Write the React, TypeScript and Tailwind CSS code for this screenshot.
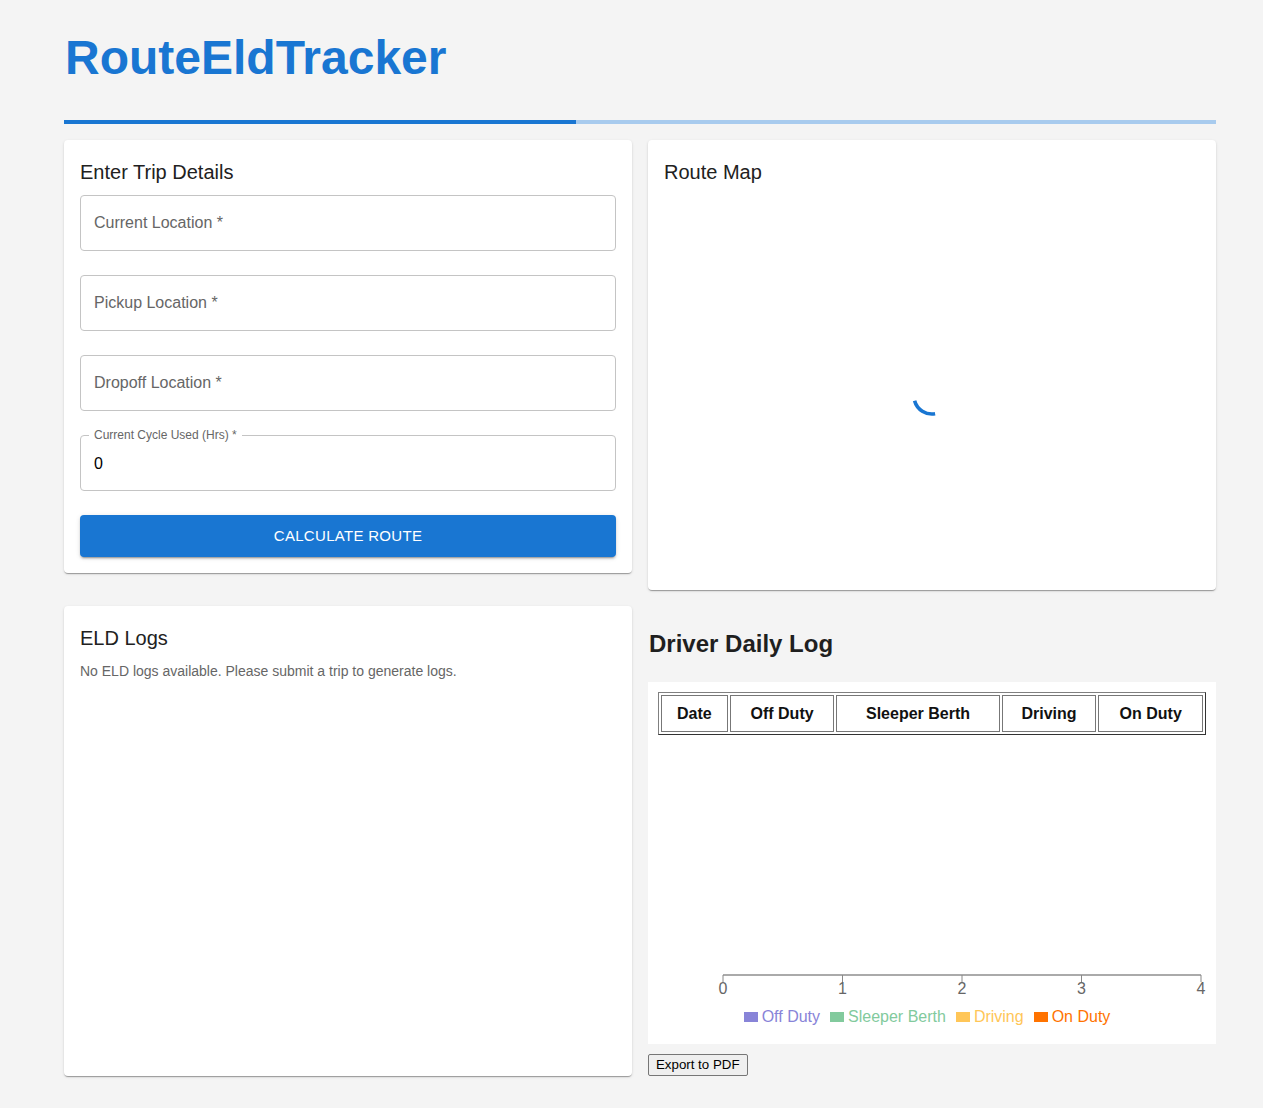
import { useState } from "react";

const font = "font-['Liberation_Sans',Arial,sans-serif]";

const fields = ["Current Location", "Pickup Location", "Dropoff Location"];

const headers = [
  { label: "Date", w: "w-[67px]" },
  { label: "Off Duty", w: "w-[105px]" },
  { label: "Sleeper Berth", w: "w-[164px]" },
  { label: "Driving", w: "w-[95px]" },
  { label: "On Duty", w: "w-[105px]" },
];

const legend = [
  { label: "Off Duty", box: "bg-[#8884d8]", text: "text-[#8884d8]" },
  { label: "Sleeper Berth", box: "bg-[#82ca9d]", text: "text-[#82ca9d]" },
  { label: "Driving", box: "bg-[#ffc658]", text: "text-[#ffc658]" },
  { label: "On Duty", box: "bg-[#ff7300]", text: "text-[#ff7300]" },
];

function Card({ title, children, className = "" }: { title: string; children?: React.ReactNode; className?: string }) {
  return (
    <div
      className={`bg-white rounded-[4px] p-4 shadow-[0_2px_1px_-1px_rgba(0,0,0,0.2),0_1px_1px_0_rgba(0,0,0,0.14),0_1px_3px_0_rgba(0,0,0,0.12)] ${className}`}
    >
      <h6 className="text-[20px] leading-[32px] text-[#212121] mb-[7px]">{title}</h6>
      {children}
    </div>
  );
}

function Spinner() {
  return (
    <svg width="40" height="40" viewBox="0 0 40 40">
      <path d="M23.1 37.7 A18 18 0 0 1 2.6 24.7" fill="none" stroke="#1976d2" strokeWidth="3.6" />
    </svg>
  );
}

export default function App() {
  const [cycle, setCycle] = useState("0");

  return (
    <div className={`min-h-[1108px] bg-[#f4f4f4] ${font}`}>
      <div className="w-[1152px] ml-[64px] pt-[29px]">
        <h1 className="text-[48px] leading-[58px] font-bold text-[#1976d2] pl-[1px]">RouteEldTracker</h1>

        {/* progress bar */}
        <div className="mt-[33px] h-[4px] flex bg-[#a8cbee]">
          <div className="w-[512px] bg-[#1976d2]" />
        </div>

        <div className="mt-4 grid grid-cols-2 gap-4">
          {/* Trip form */}
          <Card title="Enter Trip Details" className="self-start">
            <div className="flex flex-col gap-6">
              {fields.map((f) => (
                <div
                  key={f}
                  className="h-[56px] border border-[#c4c4c4] rounded-[4px] flex items-center px-[13px] text-[16px] text-[#666]"
                >
                  {f} *
                </div>
              ))}
              <div className="relative h-[56px] border border-[#c4c4c4] rounded-[4px] flex items-center px-[13px] pt-[2px]">
                <span className="absolute -top-[8px] left-[8px] px-[5px] bg-white text-[12px] leading-[15px] text-[#666]">
                  Current Cycle Used (Hrs) *
                </span>
                <input
                  value={cycle}
                  onChange={(e) => setCycle(e.target.value)}
                  className="w-full outline-none text-[16px] text-black bg-transparent"
                />
              </div>
              <button className="h-[42px] rounded-[4px] bg-[#1976d2] text-white text-[15px] tracking-[0.3px] shadow-[0_3px_1px_-2px_rgba(0,0,0,0.2),0_2px_2px_0_rgba(0,0,0,0.14),0_1px_5px_0_rgba(0,0,0,0.12)]">
                CALCULATE ROUTE
              </button>
            </div>
          </Card>

          {/* Map */}
          <Card title="Route Map" className="self-start">
            <div className="h-[379px] flex justify-center pt-[181px]">
              <Spinner />
            </div>
          </Card>

          {/* ELD Logs */}
          <Card title="ELD Logs" className="h-[470px]">
            <p className="text-[14px] leading-[20px] text-[#666]">
              No ELD logs available. Please submit a trip to generate logs.
            </p>
          </Card>

          {/* Daily log */}
          <div>
            <h2 className="pt-[24px] pl-[1px] text-[24px] leading-[28px] font-bold text-[#1f1f1f]">Driver Daily Log</h2>
            <div className="mt-[24px] bg-white h-[362px] p-[10px]">
              <table className="border-separate border-spacing-[2px] border border-[#808080] border-b-[#333] border-r-[#333]">
                <thead>
                  <tr>
                    {headers.map((h) => (
                      <th
                        key={h.label}
                        className={`${h.w} h-[37px] border border-[#777] text-[16px] font-bold text-[#111] text-center`}
                      >
                        {h.label}
                      </th>
                    ))}
                  </tr>
                </thead>
              </table>

              {/* time axis */}
              <svg width="548" height="270" className="block -ml-[10px] overflow-visible" viewBox="0 0 548 270">
                <line x1="75" y1="240" x2="553" y2="240" stroke="#aaa" strokeWidth="2" />
                {[75, 194.5, 314, 433.5, 553].map((x, i) => (
                  <g key={i}>
                    <line x1={x} y1="240" x2={x} y2="247" stroke="#888" strokeWidth="1" />
                    <text
                      x={x}
                      y="259"
                      textAnchor="middle"
                      fontSize="16"
                      fill="#666"
                      fontFamily="Liberation Sans, Arial, sans-serif"
                    >
                      {i}
                    </text>
                  </g>
                ))}
              </svg>
              <div className="flex justify-center mt-[2px]">
                {legend.map((l) => (
                  <div key={l.label} className="flex items-center mr-[10px]">
                    <span className={`w-[14px] h-[10px] mr-[4px] ${l.box}`} />
                    <span className={`text-[16px] leading-[20px] ${l.text}`}>{l.label}</span>
                  </div>
                ))}
              </div>
            </div>
            <button className="mt-[10px] h-[22px] px-[7px] text-[13.3px] text-black bg-[#efefef] border border-[#767676] rounded-[2px]">
              Export to PDF
            </button>
          </div>
        </div>
      </div>
    </div>
  );
}
